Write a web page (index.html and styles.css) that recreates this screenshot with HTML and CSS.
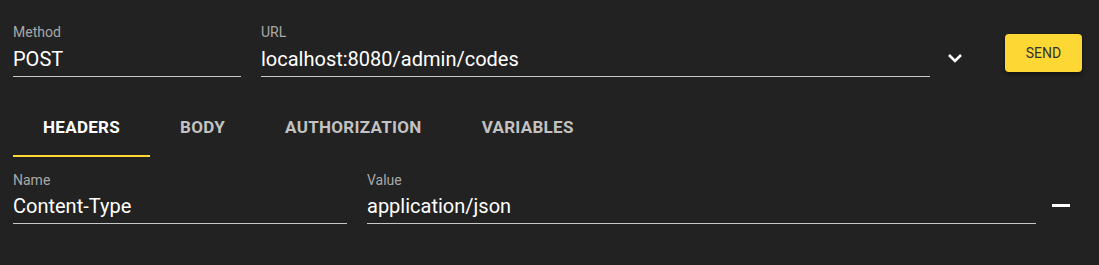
FILE: index.html
```html
<!DOCTYPE html>
<html>
<head>
<meta charset="utf-8">
<link rel="stylesheet" href="styles.css">
</head>
<body>
<div class="page">
  <div class="row top">
    <div class="field method">
      <div class="label">Method</div>
      <div class="value">POST</div>
    </div>
    <div class="field url">
      <div class="label">URL</div>
      <div class="value">localhost:8080/admin/codes</div>
    </div>
    <div class="chev">
      <svg width="16" height="10" viewBox="0 0 16 10"><path d="M2 2 L8 8 L14 2" fill="none" stroke="#fff" stroke-width="2.6"/></svg>
    </div>
    <button class="send">SEND</button>
  </div>
  <div class="tabs">
    <div class="tab active">HEADERS</div>
    <div class="tab">BODY</div>
    <div class="tab">AUTHORIZATION</div>
    <div class="tab">VARIABLES</div>
  </div>
  <div class="row header-row">
    <div class="field name">
      <div class="label">Name</div>
      <div class="value">Content-Type</div>
    </div>
    <div class="field val">
      <div class="label">Value</div>
      <div class="value">application/json</div>
    </div>
    <div class="remove"><span class="minus"></span></div>
  </div>
</div>
</body>
</html>
```
FILE: styles.css
```css
html, body {
  margin: 0;
  padding: 0;
  background: #222222;
}
body {
  font-family: Roboto, "Liberation Sans", sans-serif;
  color: #fff;
  width: 1099px;
  height: 265px;
  overflow: hidden;
}
.page {
  padding: 24px 13px 0 13px;
}
.row {
  display: flex;
  align-items: flex-start;
}
.field {
  display: flex;
  flex-direction: column;
  flex-shrink: 0;
  border-bottom: 1px solid #c8c8c8;
}
.label {
  font-size: 14px;
  line-height: 16px;
  color: #a8a8a8;
  height: 16px;
}
.value {
  font-size: 20px;
  line-height: 24px;
  padding: 7px 0 5px 0;
  color: #fff;
}
.method { width: 228px; }
.url { width: 669px; margin-left: 20px; }
.chev {
  width: 50px;
  display: flex;
  justify-content: center;
  padding-top: 29px;
}
.send {
  margin-left: 25px;
  margin-top: 10px;
  width: 77px;
  height: 38px;
  background: #fdd835;
  border: none;
  border-radius: 4px;
  font-family: Roboto, "Liberation Sans", sans-serif;
  font-size: 14px;
  color: #333;
  box-shadow: 0 2px 4px rgba(0,0,0,0.5);
  padding: 0;
}
.tabs {
  display: flex;
  margin-top: 20px;
}
.tab {
  padding: 20px 30px 18px 30px;
  font-size: 17px;
  font-weight: 700;
  letter-spacing: 0.3px;
  line-height: 20px;
  color: #c2c2c2;
  border-bottom: 2px solid transparent;
}
.tab.active {
  color: #fff;
  border-bottom-color: #fdd835;
}
.header-row {
  margin-top: 15px;
}
.header-row .value {
  padding: 6px 0 5px 0;
}
.name { width: 334px; }
.val { width: 669px; margin-left: 20px; }
.remove {
  width: 52px;
  display: flex;
  padding-top: 32px;
}
.minus {
  display: block;
  width: 18px;
  height: 3px;
  background: #fff;
  margin-left: 16px;
}
```
